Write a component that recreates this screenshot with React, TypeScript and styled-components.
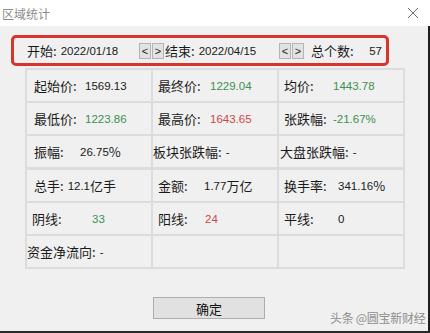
import React from 'react';
import styled, { createGlobalStyle } from 'styled-components';

type Tone = 'plain' | 'up' | 'down';

type CellData = {
  label?: string;
  value?: string;
  tone?: Tone;
  labelWidth?: number;
  pad?: number;
};

const GlobalStyle = createGlobalStyle`
  html, body {
    margin: 0;
    padding: 0;
    background: #f0f0f0;
  }
  body {
    font-family: "Liberation Sans", "Noto Sans CJK SC", sans-serif;
  }
`;

const Window = styled.div`
  position: relative;
  width: 430px;
  height: 333px;
  background: #f0f0f0;
  overflow: hidden;
  display: flex;
  flex-direction: column;
`;

const TitleBar = styled.div`
  height: 26px;
  flex: none;
  background: #ffffff;
  display: flex;
  align-items: center;
  justify-content: space-between;
  padding: 0 11px 0 2px;
`;

const Title = styled.span`
  font-family: "Noto Sans CJK SC", sans-serif;
  font-size: 12px;
  color: #8c8c8c;
`;

const Body = styled.div`
  flex: 1;
  display: flex;
  flex-direction: column;
  padding-top: 9px;
`;

const RangeBar = styled.div`
  margin-left: 11px;
  width: 378px;
  height: 31px;
  box-sizing: border-box;
  border: 3px solid #d8342f;
  border-radius: 5px;
  display: flex;
  align-items: center;
  padding-left: 13px;
`;

const RangeField = styled.div<{ $width: number }>`
  width: ${(p) => p.$width}px;
  flex: none;
  display: flex;
  align-items: center;
  white-space: nowrap;
`;

const Cn = styled.span`
  font-family: "Noto Sans CJK SC", sans-serif;
  font-size: 13px;
  color: #1a1a1a;
`;

const Num = styled.span<{ $tone?: Tone }>`
  font-family: "Liberation Sans", sans-serif;
  font-size: 11.5px;
  color: ${(p) => (p.$tone === 'up' ? '#d14545' : p.$tone === 'down' ? '#3b9150' : '#1a1a1a')};
`;

const DateText = styled(Num)`
  margin-left: 4px;
`;

const StepButton = styled.button`
  width: 12px;
  height: 16px;
  flex: none;
  margin: 0 1px 0 0;
  padding: 0;
  border: 1px solid #b4b4b4;
  background: #e2e2e2;
  font-family: "Liberation Sans", sans-serif;
  font-size: 11px;
  color: #222;
  line-height: 14px;
`;

const CountLabel = styled(Cn)`
  margin-left: 6px;
  width: 56px;
`;

const CountValue = styled(Num)`
  width: 15px;
  text-align: right;
`;

const Table = styled.div`
  margin: 2px 0 0 25px;
  width: 380px;
  display: flex;
  flex-direction: column;
`;

const Group = styled.div<{ $first?: boolean }>`
  display: grid;
  grid-template-columns: repeat(3, 124px);
  grid-auto-rows: 31px;
  gap: 2px;
  padding: ${(p) => (p.$first ? '2px' : '1px 2px 2px')};
  background: #dcdcdc;
`;

const Cell = styled.div<{ $pad: number }>`
  background: #f0f0f0;
  display: flex;
  align-items: center;
  padding-left: ${(p) => p.$pad}px;
  white-space: nowrap;
  overflow: hidden;
`;

const Label = styled(Cn)<{ $width?: number }>`
  flex: none;
  ${(p) => (p.$width ? `width: ${p.$width}px;` : 'margin-right: 4px;')}
`;

const Footer = styled.div`
  padding: 28px 0 0 153px;
`;

const OkButton = styled.button`
  width: 112px;
  height: 22px;
  border: 1px solid #adadad;
  background: #e1e1e1;
  font-family: "Noto Sans CJK SC", sans-serif;
  font-size: 13px;
  color: #111;
  padding: 0;
`;

const Watermark = styled.span`
  position: absolute;
  left: 330px;
  top: 309px;
  font-family: "Noto Sans CJK SC", sans-serif;
  font-size: 12px;
  color: #8e8e8e;
  letter-spacing: -0.3px;
`;

const EdgeRight = styled.div`
  position: absolute;
  right: 0;
  top: 26px;
  bottom: 0;
  width: 2px;
  background: #1e1e1e;
`;

const EdgeBottom = styled.div`
  position: absolute;
  left: 0;
  right: 0;
  bottom: 0;
  height: 2px;
  background: #2a2a2a;
`;

const groupA: CellData[] = [
  { label: '起始价:', value: '1569.13', labelWidth: 51, pad: 7 },
  { label: '最终价:', value: '1229.04', tone: 'down', labelWidth: 52, pad: 5 },
  { label: '均价:', value: '1443.78', tone: 'down', labelWidth: 49, pad: 5 },
  { label: '最低价:', value: '1223.86', tone: 'down', labelWidth: 51, pad: 7 },
  { label: '最高价:', value: '1643.65', tone: 'up', labelWidth: 52, pad: 5 },
  { label: '张跌幅:', value: '-21.67%', tone: 'down', labelWidth: 49, pad: 5 },
  { label: '振幅:', value: '26.75%', labelWidth: 46, pad: 7 },
  { label: '板块张跌幅:', value: '-', pad: 0 },
  { label: '大盘张跌幅:', value: '-', pad: 1 },
];

const groupB: CellData[] = [
  { label: '总手:', value: '12.1亿手', pad: 7 },
  { label: '金额:', value: '1.77万亿', labelWidth: 46, pad: 5 },
  { label: '换手率:', value: '341.16%', labelWidth: 54, pad: 5 },
  { label: '阴线:', value: '33', tone: 'down', labelWidth: 60, pad: 5 },
  { label: '阳线:', value: '24', tone: 'up', labelWidth: 47, pad: 5 },
  { label: '平线:', value: '0', labelWidth: 54, pad: 5 },
  { label: '资金净流向:', value: '-', pad: 0 },
  {},
  {},
];

const CloseIcon = () => (
  <svg width="12" height="12" viewBox="0 0 12 12">
    <path d="M1 1 L11 11 M11 1 L1 11" stroke="#6f6f6f" strokeWidth="1" fill="none" />
  </svg>
);

// numbers and the trailing unit (亿手, 万亿) use different fonts
const renderValue = (value: string, tone?: Tone) => {
  const m = value.match(/^([\d.]+)([^\d.]+)$/);
  if (m) {
    return (
      <>
        <Num $tone={tone}>{m[1]}</Num>
        <Cn>{m[2]}</Cn>
      </>
    );
  }
  return <Num $tone={tone}>{value}</Num>;
};

const StatCell: React.FC<{ cell: CellData }> = ({ cell }) => (
  <Cell $pad={cell.pad ?? 5}>
    {cell.label && <Label $width={cell.labelWidth}>{cell.label}</Label>}
    {cell.value && renderValue(cell.value, cell.tone)}
  </Cell>
);

const App: React.FC = () => (
  <>
    <GlobalStyle />
    <Window>
      <TitleBar>
        <Title>区域统计</Title>
        <CloseIcon />
      </TitleBar>

      <Body>
        <RangeBar>
          <RangeField $width={112}>
            <Cn>开始:</Cn>
            <DateText>2022/01/18</DateText>
          </RangeField>
          <StepButton>&lt;</StepButton>
          <StepButton>&gt;</StepButton>
          <RangeField $width={114}>
            <Cn>结束:</Cn>
            <DateText>2022/04/15</DateText>
          </RangeField>
          <StepButton>&lt;</StepButton>
          <StepButton>&gt;</StepButton>
          <CountLabel>总个数:</CountLabel>
          <CountValue>57</CountValue>
        </RangeBar>

        <Table>
          <Group $first>
            {groupA.map((c, i) => (
              <StatCell key={i} cell={c} />
            ))}
          </Group>
          <Group>
            {groupB.map((c, i) => (
              <StatCell key={i} cell={c} />
            ))}
          </Group>
        </Table>

        <Footer>
          <OkButton>确定</OkButton>
        </Footer>
      </Body>

      <Watermark>头条 @圆宝新财经</Watermark>
      <EdgeRight />
      <EdgeBottom />
    </Window>
  </>
);

export default App;
